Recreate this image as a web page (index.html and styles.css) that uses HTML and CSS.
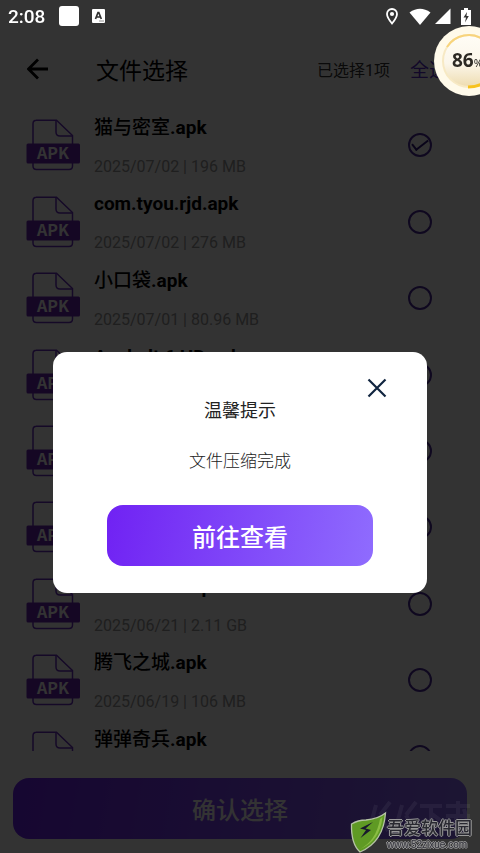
FILE: index.html
```html
<!DOCTYPE html>
<html lang="zh-CN">
<head>
<meta charset="utf-8">
<meta name="viewport" content="width=device-width, initial-scale=1">
<title>文件选择</title>
<link rel="stylesheet" href="styles.css">
</head>
<body>
<svg class="defs" aria-hidden="true">
  <symbol id="apk" viewBox="0 0 54 52">
    <path d="M10 1.2H30.500L46.500 16.500V47q0 3.500-3.500 3.500H10.500Q7 50.500 7 47V4.700Q7 1.200 10.500 1.200Z" fill="none" stroke="#6a2fc0" stroke-width="1.500"/>
    <path d="M30 1.500V13q0 4 4 4H46.500" fill="none" stroke="#6a2fc0" stroke-width="1.500"/>
    <rect x="0.500" y="24.500" width="53.500" height="20" rx="1.500" fill="#6a24b4"/>
    <text x="27" y="40" text-anchor="middle" class="apk-label">APK</text>
  </symbol>
</svg>
<main class="app">
  <header class="header">
    <button class="back" type="button" aria-label="返回">
      <svg viewBox="0 0 22 22" width="22" height="22"><path d="M21 11H2M11 1.500L1.500 11L11 20.500" fill="none" stroke="#000" stroke-width="2.800"/></svg>
    </button>
    <h1 class="title">文件选择</h1>
    <span class="count">已选择1项</span>
    <button class="all" type="button">全选</button>
  </header>
  <section class="viewport">
    <ul class="files">
      <li class="file"><svg class="icon"><use href="#apk"/></svg><label class="info" for="f1"><span class="name">猫与密室<b>.apk</b></span><span class="meta">2025/07/02 | 196 MB</span></label><input class="check" type="checkbox" id="f1" checked></li>
      <li class="file"><svg class="icon"><use href="#apk"/></svg><label class="info" for="f2"><span class="name"><b>com.tyou.rjd.apk</b></span><span class="meta">2025/07/02 | 276 MB</span></label><input class="check" type="checkbox" id="f2"></li>
      <li class="file"><svg class="icon"><use href="#apk"/></svg><label class="info" for="f3"><span class="name">小口袋<b>.apk</b></span><span class="meta">2025/07/01 | 80.96 MB</span></label><input class="check" type="checkbox" id="f3"></li>
      <li class="file"><svg class="icon"><use href="#apk"/></svg><label class="info" for="f4"><span class="name"><b>Asphalt 6 HD.apk</b></span></label><input class="check" type="checkbox" id="f4"></li>
      <li class="file"><svg class="icon"><use href="#apk"/></svg><label class="info" for="f5"><span class="name"><b>.apk</b></span></label><input class="check" type="checkbox" id="f5"></li>
      <li class="file"><svg class="icon"><use href="#apk"/></svg><label class="info" for="f6"><span class="name"><b>.apk</b></span></label><input class="check" type="checkbox" id="f6"></li>
      <li class="file"><svg class="icon"><use href="#apk"/></svg><label class="info" for="f7"><span class="name"><b>Mini World.apk</b></span><span class="meta">2025/06/21 | 2.11 GB</span></label><input class="check" type="checkbox" id="f7"></li>
      <li class="file"><svg class="icon"><use href="#apk"/></svg><label class="info" for="f8"><span class="name">腾飞之城<b>.apk</b></span><span class="meta">2025/06/19 | 106 MB</span></label><input class="check" type="checkbox" id="f8"></li>
      <li class="file"><svg class="icon"><use href="#apk"/></svg><label class="info" for="f9"><span class="name">弹弹奇兵<b>.apk</b></span></label><input class="check" type="checkbox" id="f9"></li>
    </ul>
  </section>
  <footer class="footer"><button class="primary" type="button">确认选择</button></footer>
</main>

<div class="overlay">
  <section class="dialog" role="dialog" aria-labelledby="dialog-title">
    <button class="close" type="button" aria-label="关闭">
      <svg viewBox="0 0 20 20" width="20" height="20"><path d="M1.500 1.500L18.500 18.500M18.500 1.500L1.500 18.500" fill="none" stroke="#10243f" stroke-width="2.200"/></svg>
    </button>
    <h2 class="dialog-title" id="dialog-title">温馨提示</h2>
    <p class="message">文件压缩完成</p>
    <button class="primary" type="button">前往查看</button>
  </section>
</div>

<div class="status">
  <span class="time">2:08</span>
  <span class="square"></span>
  <svg viewBox="0 0 13 14" width="13" height="14"><rect width="13" height="14" rx="1" fill="#fff"/><path d="M3.500 10L6 3.500h.8L9.300 10M4.500 8h4" fill="none" stroke="#333" stroke-width="1.700"/><path d="M7 12h5" stroke="#777" stroke-width=".8"/></svg>
  <svg class="pin" viewBox="0 0 12 17" width="12" height="17"><path d="M6 1C3.200 1 1 3.200 1 6c0 3.500 5 9.500 5 9.500S11 9.500 11 6c0-2.800-2.200-5-5-5Z" fill="none" stroke="#fff" stroke-width="1.800"/><circle cx="6" cy="6" r="2.100" fill="#fff"/></svg>
  <svg class="wifi" viewBox="0 0 22 17" width="22" height="17"><path d="M0.500 4.500Q11-3 21.500 4.500L11 17Z" fill="#fff"/></svg>
  <svg class="signal" viewBox="0 0 16 16" width="16" height="16"><path d="M0 16L15.500.5V16Z" fill="#fff"/></svg>
  <svg class="battery" viewBox="0 0 10 17" width="10" height="17"><path d="M3 0h4v2h3v15H0V2h3Z" fill="#fff"/><path d="M6 4L2.500 9.500H5L4 14.500L7.800 8H5.500Z" fill="#333"/></svg>
</div>

<div class="ball-clip">
  <div class="ball">
    <svg viewBox="0 0 70 70" width="70" height="70">
      <defs><linearGradient id="gold" x2="0" y2="1"><stop offset="0" stop-color="#fffdf6"/><stop offset=".55" stop-color="#fbf6ea"/><stop offset="1" stop-color="#eedcaf"/></linearGradient></defs>
      <circle cx="35" cy="35" r="35" fill="#fffaea"/>
      <circle cx="35" cy="35" r="26" fill="url(#gold)" stroke="#f7e9c4" stroke-width="2"/>
      <path d="M13 21A26 26 0 0 1 50 14" fill="none" stroke="#f8d47c" stroke-width="2"/>
      <path d="M34 61Q42 61 48 58" fill="none" stroke="#f7c21e" stroke-width="3"/>
    </svg>
    <span class="percent"><b>86</b>%</span>
  </div>
</div>

<svg class="ghost" viewBox="0 0 106 40" width="106" height="40" aria-hidden="true">
  <path d="M10 8L3 34M14 18L24 5M14 18L22 34M36 8L29 34M40 18L50 5M40 18L48 34M54 9H76M65 9V36M66 17L74 23M80 9H104M92 4V20M80 19H104M84 26H96M90 20V36M98 12L104 34" fill="none" stroke="#fff" stroke-width="4"/>
</svg>
<div class="watermark">
  <svg viewBox="0 0 38 42" width="38" height="42"><path d="M36.500 2Q34.500 31 11 41Q2 33 2.500 13Q9 9 17 9Q29 8 36.500 2Z" fill="#5f9a24" stroke="#b6c4a6" stroke-width="1.300"/><path d="M31 8Q27 30 11 38Q31 30 33.500 6Z" fill="#8abd43"/><path d="M24 11L11 17.500L17 19L11.500 27L22 19L16.500 17.500Z" fill="#18182d"/></svg>
  <div class="mark-text"><span class="mark-name">吾爱软件园</span><span class="mark-url">www.52zixue.com</span></div>
</div>
</body>
</html>
```
FILE: styles.css
```css
* { box-sizing: border-box; }
body {
  margin: 0;
  background: #fff;
  color: #000;
  font-family: Roboto, "Noto Sans CJK SC", sans-serif;
}
button {
  border: 0;
  padding: 0;
  background: none;
  font-family: inherit;
  cursor: pointer;
}
svg { display: block; flex: none; }
.defs { display: none; }
.apk-label {
  font: 700 16px "Noto Sans CJK SC", sans-serif;
  fill: #fff;
}

/* File picker */
.app {
  display: flex;
  flex-direction: column;
  height: 100vh;
  padding-top: 32px;
}
.header {
  display: flex;
  align-items: center;
  height: 75px;
  padding: 0 0 2px 27px;
}
.title {
  flex: 1;
  margin: 0 0 0 47px;
  font-size: 23px;
  font-weight: 400;
}
.count { color: #333; font-size: 16px; }
.all {
  margin: 0 32px 0 20px;
  color: #5a2ccc;
  font-size: 19px;
}
.viewport { flex: 1; min-height: 0; overflow: hidden; }
.files {
  display: grid;
  grid-template-rows: repeat(9, 1fr);
  height: 688px;
  margin: 0;
  padding: 0 48px 0 26px;
  list-style: none;
}
.file { display: flex; align-items: center; }
.icon { width: 54px; height: 52px; }
.info {
  display: flex;
  flex: 1;
  flex-direction: column;
  align-self: flex-start;
  gap: 15px;
  margin-left: 14px;
  padding-top: 9px;
}
.name { font-size: 19px; font-weight: 500; line-height: 24px; }
.name b { font-weight: 700; }
.meta { color: #999; font-size: 16px; line-height: 24px; }
.check {
  display: grid;
  place-items: center;
  width: 24px;
  height: 24px;
  margin: 0;
  border: 2px solid #4b2a9c;
  border-radius: 50%;
  appearance: none;
}
.check:checked::before {
  content: "";
  width: 14px;
  height: 6px;
  border: solid #2e167c;
  border-width: 0 0 2px 2px;
  transform: translateY(-2px) rotate(-38deg);
}
.footer { padding: 27px 13px 14px; }
.primary {
  display: block;
  width: 100%;
  height: 61px;
  border-radius: 16px;
  background: linear-gradient(100deg, #7022f3, #8f6cfe);
  color: #fff;
  font-size: 24px;
  font-weight: 500;
}

/* Completion dialog */
.overlay {
  position: fixed;
  inset: 0;
  padding: 352px 53px 0;
  background: rgba(0, 0, 0, 0.8);
}
.dialog {
  position: relative;
  padding: 45px 54px 27px;
  border-radius: 14px;
  background: #fff;
  text-align: center;
}
.close {
  position: absolute;
  top: 26px;
  right: 40px;
}
.dialog-title {
  margin: 0 0 23px;
  color: #222;
  font-size: 18px;
  font-weight: 400;
  line-height: 28px;
}
.message {
  margin: 0 0 31px;
  color: #222;
  font-size: 17px;
  font-weight: 300;
  line-height: 26px;
}

/* System status bar */
.status {
  position: fixed;
  inset: 0 0 auto;
  display: flex;
  align-items: center;
  height: 32px;
  padding: 0 9px 0 8px;
  color: #fff;
}
.time { font-size: 19px; font-weight: 500; }
.square {
  width: 20px;
  height: 20px;
  margin: 0 13px 0 14px;
  border-radius: 3px;
  background: #fff;
}
.pin { margin-left: auto; }
.wifi { margin-left: 11px; }
.signal { margin-left: 4px; }
.battery { margin-left: 10px; }

/* Floating charge indicator */
.ball-clip {
  position: fixed;
  top: 26px;
  right: 0;
  width: 46px;
  height: 70px;
  overflow: hidden;
}
.ball { position: relative; width: 70px; height: 70px; }
.percent {
  position: absolute;
  top: 22px;
  left: 18px;
  color: #2c2924;
  font-family: "Noto Sans", sans-serif;
  font-size: 11px;
  line-height: 24px;
  white-space: nowrap;
}
.percent b { font-size: 19px; }

/* Site marks */
.ghost {
  position: fixed;
  right: 8px;
  bottom: 16px;
  opacity: 0.05;
}
.watermark {
  position: fixed;
  right: 8px;
  bottom: 0;
  display: flex;
  align-items: flex-end;
}
.mark-text {
  display: flex;
  flex-direction: column;
  padding-bottom: 2px;
  color: #292931;
  text-shadow: 1px 0 #999, -1px 0 #999, 0 1px #999, 0 -1px #999;
}
.mark-name { font-size: 17px; font-weight: 500; line-height: 20px; }
.mark-url {
  color: #33333b;
  font-family: "Liberation Sans", sans-serif;
  font-size: 10px;
  line-height: 13px;
}
```
